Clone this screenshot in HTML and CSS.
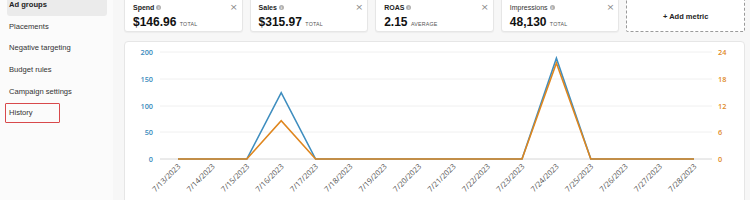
FILE: index.html
```html
<!DOCTYPE html>
<html>
<head>
<meta charset="utf-8">
<link rel="stylesheet" href="styles.css">
</head>
<body>
<div class="page">
  <nav class="sidebar">
    <div class="nav-item active">Ad groups</div>
    <div class="nav-item">Placements</div>
    <div class="nav-item">Negative targeting</div>
    <div class="nav-item">Budget rules</div>
    <div class="nav-item">Campaign settings</div>
    <div class="nav-item marked">History</div>
  </nav>
  <main class="main">
    <div class="cards">
      <div class="card">
        <div class="card-head"><span class="card-label">Spend <span class="info">i</span></span><span class="close">×</span></div>
        <div class="card-value">$146.96 <span class="unit">TOTAL</span></div>
      </div>
      <div class="card">
        <div class="card-head"><span class="card-label">Sales <span class="info">i</span></span><span class="close">×</span></div>
        <div class="card-value">$315.97 <span class="unit">TOTAL</span></div>
      </div>
      <div class="card">
        <div class="card-head"><span class="card-label">ROAS <span class="info">i</span></span><span class="close">×</span></div>
        <div class="card-value">2.15 <span class="unit">AVERAGE</span></div>
      </div>
      <div class="card">
        <div class="card-head"><span class="card-label light">Impressions <span class="info">i</span></span><span class="close">×</span></div>
        <div class="card-value">48,130 <span class="unit">TOTAL</span></div>
      </div>
      <div class="add-metric">+ Add metric</div>
    </div>
    <div class="chart-panel">
      <svg class="chart" width="620" height="170" viewBox="0 0 620 170">
        <g class="grid">
          <line x1="36" y1="11" x2="588" y2="11"/>
          <line x1="36" y1="38" x2="588" y2="38"/>
          <line x1="36" y1="65" x2="588" y2="65"/>
          <line x1="36" y1="91" x2="588" y2="91"/>
        </g>
        <line class="zero" x1="36" y1="118" x2="588" y2="118"/>
        <g class="ylabels left">
          <text x="29" y="13.5">200</text>
          <text x="29" y="40.5">150</text>
          <text x="29" y="67.5">100</text>
          <text x="29" y="93.5">50</text>
          <text x="29" y="120.5">0</text>
        </g>
        <g class="ylabels right">
          <text x="594" y="13.5">24</text>
          <text x="594" y="40.5">18</text>
          <text x="594" y="67.5">12</text>
          <text x="594" y="93.5">6</text>
          <text x="594" y="120.5">0</text>
        </g>
        <polyline class="line blue" points="54,118 88.4,118 122.8,118 157.2,51.7 191.6,118 226,118 260.4,118 294.8,118 329.2,118 363.6,118 398,118 432.4,17.3 466.8,118 501.2,118 535.6,118 570,118"/>
        <polyline class="line orange" points="54,118 88.4,118 122.8,118 157.2,79.7 191.6,118 226,118 260.4,118 294.8,118 329.2,118 363.6,118 398,118 432.4,22 466.8,118 501.2,118 535.6,118 570,118"/>
        <g class="xlabels">
          <text transform="translate(57,126) rotate(-45)">7/13/2023</text>
          <text transform="translate(91.4,126) rotate(-45)">7/14/2023</text>
          <text transform="translate(125.8,126) rotate(-45)">7/15/2023</text>
          <text transform="translate(160.2,126) rotate(-45)">7/16/2023</text>
          <text transform="translate(194.6,126) rotate(-45)">7/17/2023</text>
          <text transform="translate(229,126) rotate(-45)">7/18/2023</text>
          <text transform="translate(263.4,126) rotate(-45)">7/19/2023</text>
          <text transform="translate(297.8,126) rotate(-45)">7/20/2023</text>
          <text transform="translate(332.2,126) rotate(-45)">7/21/2023</text>
          <text transform="translate(366.6,126) rotate(-45)">7/22/2023</text>
          <text transform="translate(401,126) rotate(-45)">7/23/2023</text>
          <text transform="translate(435.4,126) rotate(-45)">7/24/2023</text>
          <text transform="translate(469.8,126) rotate(-45)">7/25/2023</text>
          <text transform="translate(504.2,126) rotate(-45)">7/26/2023</text>
          <text transform="translate(538.6,126) rotate(-45)">7/27/2023</text>
          <text transform="translate(573,126) rotate(-45)">7/28/2023</text>
        </g>
      </svg>
    </div>
  </main>
</div>
</body>
</html>
```

FILE: styles.css
```css
* { box-sizing: border-box; }
html, body { margin: 0; padding: 0; }
body {
  width: 750px;
  height: 200px;
  overflow: hidden;
  background: #f7f7f7;
  font-family: "Liberation Sans", Arial, sans-serif;
  color: #333;
}
.page {
  display: grid;
  grid-template-columns: 113px 1fr;
  height: 200px;
}
.sidebar {
  background: #fbfbfb;
  padding: 0 6px 0 7px;
  margin-top: -6px;
}
.nav-item {
  height: 21.7px;
  line-height: 21.7px;
  font-size: 7.6px;
  padding-left: 2px;
  color: #333;
}
.nav-item.active {
  background: #ebebeb;
  border-radius: 0 0 3px 3px;
  font-weight: bold;
  color: #222;
}
.nav-item.marked {
  width: 55px;
  height: 20px;
  line-height: 17px;
  margin-left: -2px;
  margin-top: 1px;
  padding-left: 3px;
  border: 1.6px solid #d8494b;
  border-radius: 1px;
}
.main {
  padding: 0 5px 0 11px;
  display: flex;
  flex-direction: column;
  gap: 9px;
}
.cards {
  display: grid;
  grid-template-columns: repeat(5, 1fr);
  gap: 7px;
  margin-top: -6px;
  height: 38px;
}
.card {
  background: #fff;
  border: 1px solid #e6e6e6;
  border-radius: 3px;
  box-shadow: 0 1px 1px rgba(0,0,0,0.04);
  padding: 8px 4px 0 8px;
}
.card-head {
  display: flex;
  justify-content: space-between;
  align-items: center;
  height: 8px;
}
.card-label {
  font-size: 7px;
  font-weight: bold;
  color: #222;
  display: flex;
  align-items: center;
  gap: 2px;
}
.card-label.light { font-weight: normal; color: #333; }
.info {
  display: inline-block;
  width: 5px;
  height: 5px;
  border-radius: 50%;
  background: #b0b0b0;
  color: #fff;
  font-size: 4px;
  line-height: 5px;
  text-align: center;
  font-weight: bold;
}
.close {
  font-family: "DejaVu Sans", sans-serif;
  font-size: 9.5px;
  color: #888;
  line-height: 8px;
}
.card-value {
  margin-top: 4px;
  font-size: 12px;
  font-weight: bold;
  color: #111;
  white-space: nowrap;
}
.unit {
  font-size: 5.3px;
  font-weight: normal;
  color: #555;
  letter-spacing: 0.2px;
}
.add-metric {
  border: 1px dashed #9a9a9a;
  border-radius: 2px;
  background: #fff;
  display: flex;
  align-items: center;
  justify-content: center;
  padding-top: 6px;
  font-size: 7.5px;
  font-weight: bold;
  color: #222;
}
.chart-panel {
  background: #fff;
  border: 1px solid #e6e6e6;
  border-radius: 4px;
  height: 170px;
  overflow: hidden;
}
.chart { display: block; margin: -1px 0 0 -1px; }
.grid line { stroke: #f0f0f0; stroke-width: 1; }
.zero { stroke: #d6d6d6; stroke-width: 1; }
.ylabels text {
  font-family: "Open Sans", sans-serif;
  font-size: 7.3px;
  font-weight: 600;
}
.ylabels.left text { fill: #3b8bbd; text-anchor: end; }
.ylabels.right text { fill: #e0891f; text-anchor: start; }
.line { fill: none; stroke-width: 1.6; stroke-linejoin: miter; }
.blue { stroke: #3f8ebf; }
.orange { stroke: #df861e; }
.xlabels text {
  font-family: "Open Sans", sans-serif;
  font-size: 7.6px;
  fill: #555;
  text-anchor: end;
}
```
